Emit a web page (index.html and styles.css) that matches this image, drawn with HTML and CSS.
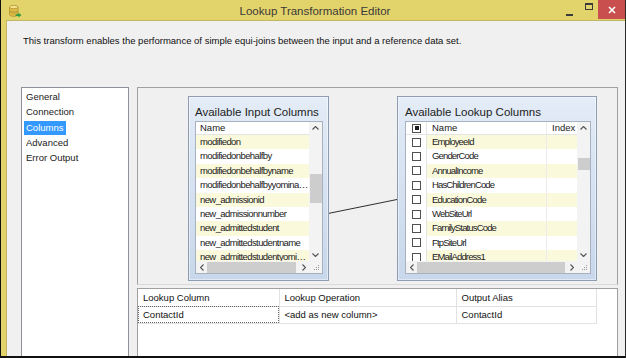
FILE: index.html
```html
<!DOCTYPE html>
<html lang="en">
<head>
    <meta charset="UTF-8">
    <meta name="viewport" content="width=device-width, initial-scale=1.0">
    <title>Lookup Transformation Editor</title>
    <link rel="stylesheet" href="styles.css">
</head>
<body>
    <div class="window">
        <div class="titlebar">
            <svg class="app-icon" viewBox="0 0 14 14" width="14" height="14">
                <path d="M1.5 3v3.2c0 1 2 1.7 4.3 1.7s4.3-.7 4.3-1.7V3" fill="#e2bb45" stroke="#a88a2a" stroke-width="0.7"/>
                <ellipse cx="5.8" cy="3" rx="4.3" ry="1.7" fill="#f6e28c" stroke="#a88a2a" stroke-width="0.7"/>
                <path d="M1.5 7.4v3.2c0 1 2 1.7 4.3 1.7s4.3-.7 4.3-1.7V7.4c0 1-2 1.7-4.3 1.7s-4.3-.7-4.3-1.7z" fill="#e2bb45" stroke="#a88a2a" stroke-width="0.7"/>
                <path d="M7.6 10.2h2.8V8.7l3.1 2.4-3.1 2.4v-1.5H7.6z" fill="#2f9c45"/>
            </svg>
            <div class="title">Lookup Transformation Editor</div>
            <div class="controls">
                <span class="ctl ctl-min"><i></i></span>
                <span class="ctl ctl-max"><i></i></span>
                <span class="ctl ctl-close">
                    <svg viewBox="0 0 8 8" width="8" height="8"><path d="M1 1l6 6M7 1L1 7" stroke="#fff" stroke-width="1.6"/></svg>
                </span>
            </div>
        </div>

        <div class="frame">
            <div class="client">
                <p class="desc">This transform enables the performance of simple equi-joins between the input and a reference data set.</p>

                <div class="main">
                    <ul class="nav">
                        <li><span>General</span></li>
                        <li><span>Connection</span></li>
                        <li class="selected"><span>Columns</span></li>
                        <li><span>Advanced</span></li>
                        <li><span>Error Output</span></li>
                    </ul>

                    <div class="pane">
                        <div class="canvas">
                            <svg class="link" width="479" height="196">
                                <line x1="190" y1="125.5" x2="259" y2="111.5" stroke="#2e2e2e" stroke-width="1"/>
                            </svg>

                            <div class="node node-input">
                                <div class="node-title">Available Input Columns</div>
                                <div class="list">
                                    <div class="list-main">
                                        <div class="list-head"><span class="cell">Name</span></div>
                                        <div class="row alt"><span class="cell">modifiedon</span></div>
                                        <div class="row"><span class="cell">modifiedonbehalfby</span></div>
                                        <div class="row alt"><span class="cell">modifiedonbehalfbyname</span></div>
                                        <div class="row"><span class="cell">modifiedonbehalfbyyominame</span></div>
                                        <div class="row alt"><span class="cell">new_admissionid</span></div>
                                        <div class="row"><span class="cell">new_admissionnumber</span></div>
                                        <div class="row alt"><span class="cell">new_admittedstudent</span></div>
                                        <div class="row"><span class="cell">new_admittedstudentname</span></div>
                                        <div class="row alt"><span class="cell">new_admittedstudentyominame</span></div>
                                    </div>
                                    <div class="vscroll">
                                        <span class="arrow"><svg viewBox="0 0 7 4" width="7" height="4"><path d="M.5 3.5l3-3 3 3" fill="none" stroke="#555" stroke-width="1.2"/></svg></span>
                                        <span class="thumb"></span>
                                        <span class="arrow arrow-end"><svg viewBox="0 0 7 4" width="7" height="4"><path d="M.5 .5l3 3 3-3" fill="none" stroke="#555" stroke-width="1.2"/></svg></span>
                                    </div>
                                    <div class="hscroll">
                                        <span class="arrow"><svg viewBox="0 0 4 7" width="4" height="7"><path d="M3.5 .5l-3 3 3 3" fill="none" stroke="#555" stroke-width="1.2"/></svg></span>
                                        <span class="thumb"></span>
                                        <span class="arrow arrow-end"><svg viewBox="0 0 4 7" width="4" height="7"><path d="M.5 .5l3 3-3 3" fill="none" stroke="#555" stroke-width="1.2"/></svg></span>
                                    </div>
                                    <div class="grip">
                                        <svg viewBox="0 0 8 8" width="8" height="8" fill="#9a9a9a"><rect x="6" y="2" width="1" height="1"/><rect x="4" y="4" width="1" height="1"/><rect x="6" y="4" width="1" height="1"/><rect x="2" y="6" width="1" height="1"/><rect x="4" y="6" width="1" height="1"/><rect x="6" y="6" width="1" height="1"/></svg>
                                    </div>
                                </div>
                            </div>

                            <div class="node node-lookup">
                                <div class="node-title">Available Lookup Columns</div>
                                <div class="list">
                                    <div class="list-main">
                                        <div class="list-head">
                                            <span class="c-check"><i class="checkbox mixed"></i></span>
                                            <span class="c-name">Name</span>
                                            <span class="c-idx">Index</span>
                                        </div>
                                        <div class="row alt"><span class="c-check"><i class="checkbox"></i></span><span class="c-name">EmployeeId</span><span class="c-idx"></span></div>
                                        <div class="row"><span class="c-check"><i class="checkbox"></i></span><span class="c-name">GenderCode</span><span class="c-idx"></span></div>
                                        <div class="row alt"><span class="c-check"><i class="checkbox"></i></span><span class="c-name">AnnualIncome</span><span class="c-idx"></span></div>
                                        <div class="row"><span class="c-check"><i class="checkbox"></i></span><span class="c-name">HasChildrenCode</span><span class="c-idx"></span></div>
                                        <div class="row alt"><span class="c-check"><i class="checkbox"></i></span><span class="c-name">EducationCode</span><span class="c-idx"></span></div>
                                        <div class="row"><span class="c-check"><i class="checkbox"></i></span><span class="c-name">WebSiteUrl</span><span class="c-idx"></span></div>
                                        <div class="row alt"><span class="c-check"><i class="checkbox"></i></span><span class="c-name">FamilyStatusCode</span><span class="c-idx"></span></div>
                                        <div class="row"><span class="c-check"><i class="checkbox"></i></span><span class="c-name">FtpSiteUrl</span><span class="c-idx"></span></div>
                                        <div class="row alt"><span class="c-check"><i class="checkbox"></i></span><span class="c-name">EMailAddress1</span><span class="c-idx"></span></div>
                                    </div>
                                    <div class="vscroll">
                                        <span class="arrow"><svg viewBox="0 0 7 4" width="7" height="4"><path d="M.5 3.5l3-3 3 3" fill="none" stroke="#555" stroke-width="1.2"/></svg></span>
                                        <span class="thumb"></span>
                                        <span class="arrow arrow-end"><svg viewBox="0 0 7 4" width="7" height="4"><path d="M.5 .5l3 3 3-3" fill="none" stroke="#555" stroke-width="1.2"/></svg></span>
                                    </div>
                                    <div class="hscroll">
                                        <span class="arrow"><svg viewBox="0 0 4 7" width="4" height="7"><path d="M3.5 .5l-3 3 3 3" fill="none" stroke="#555" stroke-width="1.2"/></svg></span>
                                        <span class="thumb"></span>
                                        <span class="arrow arrow-end"><svg viewBox="0 0 4 7" width="4" height="7"><path d="M.5 .5l3 3-3 3" fill="none" stroke="#555" stroke-width="1.2"/></svg></span>
                                    </div>
                                    <div class="grip">
                                        <svg viewBox="0 0 8 8" width="8" height="8" fill="#9a9a9a"><rect x="6" y="2" width="1" height="1"/><rect x="4" y="4" width="1" height="1"/><rect x="6" y="4" width="1" height="1"/><rect x="2" y="6" width="1" height="1"/><rect x="4" y="6" width="1" height="1"/><rect x="6" y="6" width="1" height="1"/></svg>
                                    </div>
                                </div>
                            </div>
                        </div>

                        <div class="mapping">
                            <table>
                                <colgroup>
                                    <col class="col-a">
                                    <col class="col-b">
                                    <col class="col-c">
                                    <col>
                                </colgroup>
                                <tr>
                                    <th>Lookup Column</th>
                                    <th>Lookup Operation</th>
                                    <th>Output Alias</th>
                                    <th class="fill"></th>
                                </tr>
                                <tr>
                                    <td class="focus">ContactId</td>
                                    <td>&lt;add as new column&gt;</td>
                                    <td>ContactId</td>
                                    <td class="fill"></td>
                                </tr>
                            </table>
                        </div>
                    </div>
                </div>
            </div>
        </div>
    </div>
</body>
</html>
```

FILE: styles.css
```css
* {
    box-sizing: border-box;
}

body {
    margin: 0;
    background-color: #000;
    font-family: "Liberation Sans", Arial, sans-serif;
    font-size: 9.5px;
    color: #1a1a1a;
}

.window {
    width: 626px;
    height: 358px;
    display: flex;
    flex-direction: column;
    overflow: hidden;
    background-color: #e3d36b;
    border-left: 1px solid #111;
    border-right: 1px solid #2a2a2a;
    border-bottom: 2px solid #111;
}

/* title bar */
.titlebar {
    height: 20px;
    flex: none;
    display: grid;
    grid-template-columns: 1fr auto 1fr;
    align-items: center;
}

.app-icon {
    margin-left: 7px;
    margin-top: 1px;
}

.title {
    font-size: 11.5px;
    color: #3a3a3a;
    padding-top: 1px;
    padding-left: 4px;
}

.controls {
    justify-self: end;
    align-self: start;
    display: flex;
    height: 19px;
}

.ctl {
    display: flex;
    justify-content: center;
}

.ctl-min {
    width: 22px;
    align-items: flex-end;
    padding-bottom: 3px;
}

.ctl-min i {
    width: 7px;
    height: 2px;
    background-color: #3a3a3a;
}

.ctl-max {
    width: 18px;
    align-items: flex-start;
    padding-top: 3px;
}

.ctl-max i {
    width: 8px;
    height: 7px;
    border: 1px solid #3a3a3a;
    border-top-width: 2px;
}

.ctl-close {
    width: 27px;
    align-items: center;
    background-color: #c94f4f;
}

/* dialog body */
.frame {
    flex: 1;
    display: flex;
    padding-left: 5px;
    min-height: 0;
}

.client {
    flex: 1;
    display: flex;
    flex-direction: column;
    overflow: hidden;
    background-color: #f0f0f0;
    border-top: 1px solid #c2b665;
    border-left: 1px solid #c2b665;
}

.desc {
    margin: 0;
    height: 66px;
    flex: none;
    padding: 14px 0 0 16px;
    line-height: 12px;
    color: #111;
}

.main {
    flex: 1;
    display: flex;
    gap: 8px;
    padding-left: 14px;
    min-height: 0;
}

.nav {
    width: 108px;
    height: 300px;
    flex: none;
    margin: 0;
    padding: 1px 0 0 2px;
    list-style: none;
    background-color: #fff;
    border: 1px solid #8d9199;
}

.nav li {
    height: 15.25px;
    line-height: 15px;
}

.nav span {
    display: inline-block;
    padding: 0 2px;
    line-height: 14px;
}

.nav .selected span {
    background-color: #3399ff;
    color: #fff;
}

.pane {
    width: 481px;
    flex: none;
    display: flex;
    flex-direction: column;
}

/* diagram surface */
.canvas {
    position: relative;
    height: 198px;
    flex: none;
    border: 1px solid #a0a0a0;
    border-bottom-color: #dadada;
}

.link {
    position: absolute;
    left: 0;
    top: 0;
}

.node {
    position: absolute;
    top: 8px;
    height: 185px;
    display: flex;
    flex-direction: column;
    padding: 0 5px 6px 6px;
    border: 1px solid #8f9db2;
    background: linear-gradient(#e3ecf7, #c8d7eb);
    box-shadow: inset 0 0 0 1px rgba(255, 255, 255, 0.45);
}

.node-input {
    left: 50px;
    width: 141px;
}

.node-lookup {
    left: 259px;
    width: 200px;
    padding-left: 7px;
}

.node-title {
    height: 24px;
    flex: none;
    padding-top: 8px;
    font-size: 11.5px;
    line-height: 14px;
    color: #222;
    white-space: nowrap;
}

.list {
    flex: 1;
    display: grid;
    grid-template-columns: 1fr 13px;
    grid-template-rows: 1fr 12px;
    overflow: hidden;
    background-color: #fff;
    border: 1px solid #a7b1c0;
}

.list-main {
    overflow: hidden;
    min-width: 0;
}

.list-head {
    height: 13px;
    line-height: 12px;
    border-bottom: 1px solid #e4e4e4;
    display: grid;
}

.row {
    height: 14.4px;
    line-height: 14px;
    display: grid;
}

.cell {
    display: block;
    padding-left: 4px;
    white-space: nowrap;
    overflow: hidden;
    text-overflow: ellipsis;
}

.node-input .row .cell {
    letter-spacing: -0.6px;
}

.row.alt .cell,
.row.alt .c-name,
.row.alt .c-idx {
    background-color: #fbf9dc;
}

/* lookup list columns */
.node-lookup .list-head,
.node-lookup .row {
    grid-template-columns: 21px 120px 1fr;
}

.c-check {
    display: flex;
    align-items: center;
    padding-left: 6px;
    background-color: #fff;
    border-right: 1px solid #e4e4e4;
}

.c-name {
    padding-left: 5px;
    white-space: nowrap;
    border-right: 1px solid #ececec;
}

.node-lookup .row .c-name {
    letter-spacing: -0.85px;
}

.c-idx {
    padding-left: 5px;
}

.checkbox {
    width: 9px;
    height: 9px;
    border: 1px solid #505050;
    background-color: #fff;
    display: flex;
    align-items: center;
    justify-content: center;
}

.checkbox.mixed::after {
    content: "";
    width: 4px;
    height: 4px;
    background-color: #1e1e1e;
}

/* scrollbars */
.vscroll {
    grid-row: 1;
    grid-column: 2;
    display: flex;
    flex-direction: column;
    align-items: center;
    background-color: #f3f3f3;
}

.vscroll .arrow {
    height: 12px;
    flex: none;
    display: flex;
    align-items: center;
}

.vscroll .arrow-end {
    margin-top: auto;
}

.vscroll .thumb {
    width: 12px;
    background-color: #cdcdcd;
}

.node-input .vscroll .thumb {
    margin-top: 40px;
    height: 29px;
}

.node-lookup .vscroll .thumb {
    margin-top: 24px;
    height: 12px;
}

.hscroll {
    grid-row: 2;
    grid-column: 1;
    display: flex;
    align-items: center;
    background-color: #f3f3f3;
}

.hscroll .arrow {
    width: 11px;
    flex: none;
    display: flex;
    justify-content: center;
}

.hscroll .arrow-end {
    margin-left: auto;
}

.hscroll .thumb {
    height: 11px;
    background-color: #cdcdcd;
}

.node-input .hscroll .thumb {
    width: 89px;
}

.node-lookup .hscroll .thumb {
    width: 148px;
}

.grip {
    grid-row: 2;
    grid-column: 2;
    display: flex;
    align-items: flex-end;
    justify-content: flex-end;
    padding: 0 2px 2px 0;
    background-color: #f3f3f3;
}

/* column mapping grid */
.mapping {
    flex: 1;
    margin-top: 3px;
    background-color: #fff;
    border-top: 1px solid #a0a0a0;
    border-left: 1px solid #a0a0a0;
    border-right: 1px solid #a0a0a0;
}

.mapping table {
    width: 100%;
    border-collapse: collapse;
    table-layout: fixed;
}

.col-a {
    width: 141px;
}

.col-b {
    width: 177px;
}

.col-c {
    width: 140px;
}

.mapping th,
.mapping td {
    height: 17px;
    padding: 0 5px;
    text-align: left;
    font-weight: normal;
    color: #111;
    white-space: nowrap;
    border-right: 1px solid #e2e2e2;
    border-bottom: 1px solid #e2e2e2;
}

.mapping td.focus {
    outline: 1px dotted #666;
    outline-offset: -1px;
}

.mapping .fill {
    border: none;
}
```
